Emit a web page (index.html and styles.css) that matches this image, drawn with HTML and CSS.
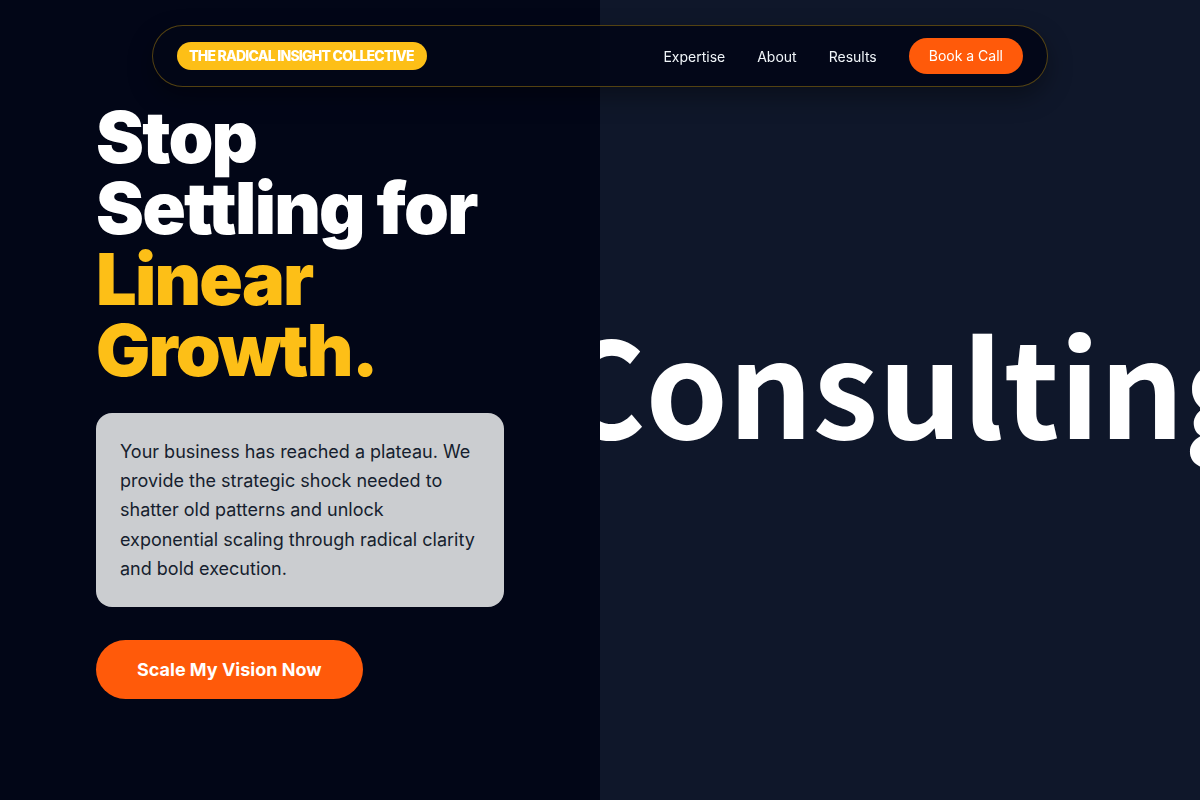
FILE: index.html
```html
<!DOCTYPE html>
<html lang="en">
<head>
<meta charset="utf-8">
<title>The Radical Insight Collective</title>
<link rel="stylesheet" href="styles.css">
</head>
<body>
<header class="nav">
  <span class="logo">THE RADICAL INSIGHT COLLECTIVE</span>
  <nav class="links">
    <a href="#" class="link">Expertise</a>
    <a href="#" class="link">About</a>
    <a href="#" class="link">Results</a>
    <a href="#" class="cta-small">Book a Call</a>
  </nav>
</header>
<main class="hero">
  <section class="left">
    <h1 class="headline">Stop<br>Settling for<br><span class="accent">Linear<br>Growth.</span></h1>
    <div class="card">
      <p>Your business has reached a plateau. We provide the strategic shock needed to shatter old patterns and unlock exponential scaling through radical clarity and bold execution.</p>
    </div>
    <a href="#" class="cta">Scale My Vision Now</a>
  </section>
  <section class="right">
    <span class="big">Consulting</span>
  </section>
</main>
</body>
</html>
```

FILE: styles.css
```css
* { box-sizing: border-box; }
html, body { margin: 0; padding: 0; }
body {
  width: 1200px;
  height: 800px;
  overflow: hidden;
  background: #020617;
  font-family: Inter, "Noto Sans", sans-serif;
  color: #fff;
}
a { text-decoration: none; color: inherit; }

.nav {
  position: fixed;
  top: 25px;
  left: 152px;
  width: 896px;
  z-index: 10;
  display: flex;
  align-items: center;
  justify-content: space-between;
  padding: 12px 24px;
  border: 1px solid rgba(234, 179, 8, 0.35);
  border-radius: 9999px;
  background: rgba(2, 6, 23, 0.92);
  box-shadow: 0 10px 25px rgba(0,0,0,0.35);
}
.logo {
  background: #fdbf17;
  color: #fff;
  font-family: Inter, sans-serif;
  font-weight: 800;
  font-size: 14px;
  letter-spacing: -0.055em;
  line-height: 28px;
  padding: 0 13px 0 12px;
  border-radius: 9999px;
}
.links {
  display: flex;
  align-items: center;
  gap: 32px;
}
.link {
  font-size: 14px;
  color: #f1f5f9;
}
.cta-small {
  background: #ff5a0a;
  color: #fff;
  font-size: 14px;
  line-height: 36px;
  padding: 0 20px;
  border-radius: 9999px;
}

.hero {
  display: grid;
  grid-template-columns: 600px 600px;
  height: 800px;
}
.left {
  background: #020617;
  padding: 0 96px;
  display: flex;
  flex-direction: column;
  justify-content: center;
  align-items: flex-start;
}
.headline {
  margin: 0;
  font-family: Inter, sans-serif;
  font-weight: 900;
  font-size: 72px;
  line-height: 71px;
  letter-spacing: -0.025em;
  color: #fff;
}
.accent { color: #fdbf17; }
.card {
  margin-top: 28px;
  width: 408px;
  background: #cbcdd0;
  border-radius: 16px;
  padding: 24px;
}
.card p {
  margin: 0;
  color: #161e2e;
  font-size: 18px;
  line-height: 29.25px;
}
.cta {
  margin-top: 33px;
  background: #ff5a0a;
  color: #fff;
  font-weight: 700;
  font-size: 18px;
  line-height: 28px;
  padding: 16px 41px 15px;
  border-radius: 9999px;
}
.right {
  background: #0f172a;
  overflow: hidden;
  display: flex;
  align-items: center;
}
.big {
  font-family: "Noto Sans CJK JP", "Noto Sans", sans-serif;
  font-weight: 700;
  font-size: 132px;
  line-height: 1;
  margin-left: -41px;
  margin-bottom: 36px;
  white-space: nowrap;
  color: #fff;
}
```
